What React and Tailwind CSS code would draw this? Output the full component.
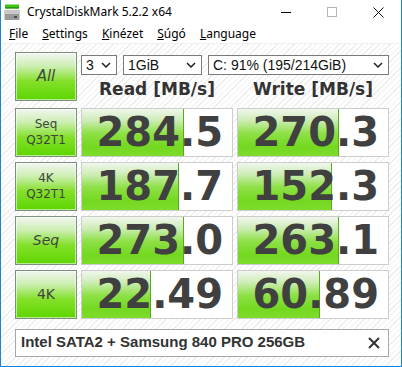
import React from "react";

const rows = [
  { label: ["Seq", "Q32T1"], read: "284.5", rw: 102, write: "270.3", ww: 101 },
  { label: ["4K", "Q32T1"], read: "187.7", rw: 97, write: "152.3", ww: 94 },
  { label: ["Seq"], single: true, italic: true, read: "273.0", rw: 102, write: "263.1", ww: 101 },
  { label: ["4K"], single: true, read: "22.49", rw: 69, write: "60.89", ww: 82 },
];

const btnCls =
  "flex flex-col items-center justify-center border border-[#7d907d] bg-[linear-gradient(to_bottom,#f3f5f1_0%,#cdefb2_28%,#84e02a_60%,#5dd600_100%)] text-[#3d463d] shadow-[inset_0_0_0_1px_rgba(255,255,255,0.55)] font-['DejaVu_Sans',sans-serif]";

function Chevron() {
  return (
    <svg width="10" height="6" viewBox="0 0 10 6" className="shrink-0">
      <path d="M1 1 L5 5 L9 1" fill="none" stroke="#222" strokeWidth="1.5" />
    </svg>
  );
}

function Combo({ text, w }) {
  return (
    <div className={`flex h-[20px] items-center justify-between border border-[#7a7a7a] bg-white pl-[4px] pr-[5px] ${w}`}>
      <span className="text-[14px] leading-none text-[#111] font-['Liberation_Sans',sans-serif]">{text}</span>
      <Chevron />
    </div>
  );
}

function Value({ text, bar }) {
  return (
    <div className="relative flex h-[49px] items-center justify-end border border-[#cdcdcd] bg-white pr-[9px]">
      <div
        className="absolute left-0 top-0 bottom-0 border-r border-[#5aa822] bg-[linear-gradient(to_bottom,#f1f6ee_0%,#cdedb6_24%,#8ee046_52%,#74d820_80%,#7ddc2c_100%)]"
        style={{ width: bar }}
      ></div>
      <span className="relative text-[40px] font-bold leading-none text-[#404040] font-['DejaVu_Sans',sans-serif]">
        {text}
      </span>
    </div>
  );
}

function App() {
  return (
    <div className="flex h-[367px] w-[402px] flex-col border-x border-b border-[#1883d7] bg-white">
      {/* title bar */}
      <div className="flex h-[24px] shrink-0 items-center">
        <svg width="16" height="16" viewBox="0 0 16 16" className="ml-[3px]">
          <rect x="1" y="0.5" width="14" height="4" fill="#3fc41a" />
          <rect x="1" y="3" width="14" height="1.5" fill="#2b9a10" />
          <rect x="0.5" y="6" width="15" height="10" rx="1" fill="#9a9a9a" />
          <rect x="0.5" y="6" width="15" height="4" rx="1" fill="#c8c8c8" />
          <rect x="10" y="12" width="3" height="2" fill="#4a4a4a" />
        </svg>
        <span className="ml-[7px] text-[12px] text-black font-['Noto_Sans',sans-serif]">CrystalDiskMark 5.2.2 x64</span>
        <div className="ml-auto flex h-full">
          <div className="flex w-[46px] items-center justify-center">
            <div className="h-px w-[10px] bg-black"></div>
          </div>
          <div className="flex w-[46px] items-center justify-center">
            <div className="h-[10px] w-[10px] border border-[#b4b4b4]"></div>
          </div>
          <div className="flex w-[46px] items-center justify-center">
            <svg width="11" height="11" viewBox="0 0 11 11">
              <path d="M0.5 0.5 L10.5 10.5 M10.5 0.5 L0.5 10.5" stroke="#111" strokeWidth="1" />
            </svg>
          </div>
        </div>
      </div>

      {/* menu bar */}
      <div className="flex h-[20px] shrink-0 items-center gap-[14px] border-b border-[#f0f0f0] pl-[8px] text-[12px] text-black font-['Noto_Sans',sans-serif]">
        <span><u>F</u>ile</span>
        <span><u>S</u>ettings</span>
        <span><u>K</u>inézet</span>
        <span><u>S</u>úgó</span>
        <span><u>L</u>anguage</span>
      </div>

      {/* client */}
      <div className="flex flex-1 flex-col bg-[repeating-linear-gradient(135deg,#ffffff_0px,#ffffff_3px,#ededed_3px,#ededed_4px)] pl-[14px] pt-[8px]">
        <div className="grid grid-cols-[62px_152px_152px] gap-x-[4px] gap-y-[5px]">
          <div className={`${btnCls} h-[49px]`}>
            <span className="text-[15px] italic">All</span>
          </div>
          <div className="col-span-2 flex flex-col">
            <div className="mt-[3px] flex gap-[6px]">
              <Combo text="3" w="w-[36px]" />
              <Combo text="1GiB" w="w-[79px]" />
              <Combo text="C: 91% (195/214GiB)" w="w-[181px]" />
            </div>
            <div className="grid flex-1 grid-cols-2 items-center gap-x-[4px] pt-[2px] text-[17px] font-bold text-[#333] font-['DejaVu_Sans',sans-serif]">
              <div className="text-center">Read [MB/s]</div>
              <div className="text-center">Write [MB/s]</div>
            </div>
          </div>

          {rows.map((r, i) => (
            <React.Fragment key={i}>
              <div className={`${btnCls} h-[49px]`}>
                {r.single ? (
                  <span className={`text-[14px] ${r.italic ? "italic" : ""}`}>{r.label[0]}</span>
                ) : (
                  <>
                    <span className="text-[12px] leading-[16px]">{r.label[0]}</span>
                    <span className="text-[12px] leading-[16px]">{r.label[1]}</span>
                  </>
                )}
              </div>
              <Value text={r.read} bar={r.rw} />
              <Value text={r.write} bar={r.ww} />
            </React.Fragment>
          ))}
        </div>

        <div className="mt-[10px] flex h-[28px] w-[374px] items-center justify-between border border-[#a8a8a8] bg-white pl-[5px] pr-[8px]">
          <span className="text-[15px] font-bold text-[#333] font-['Liberation_Sans',sans-serif]">
            Intel SATA2 + Samsung 840 PRO 256GB
          </span>
          <svg width="12" height="12" viewBox="0 0 12 12">
            <path d="M1 1 L11 11 M11 1 L1 11" stroke="#333" strokeWidth="2" />
          </svg>
        </div>
      </div>
    </div>
  );
}

export default App;
